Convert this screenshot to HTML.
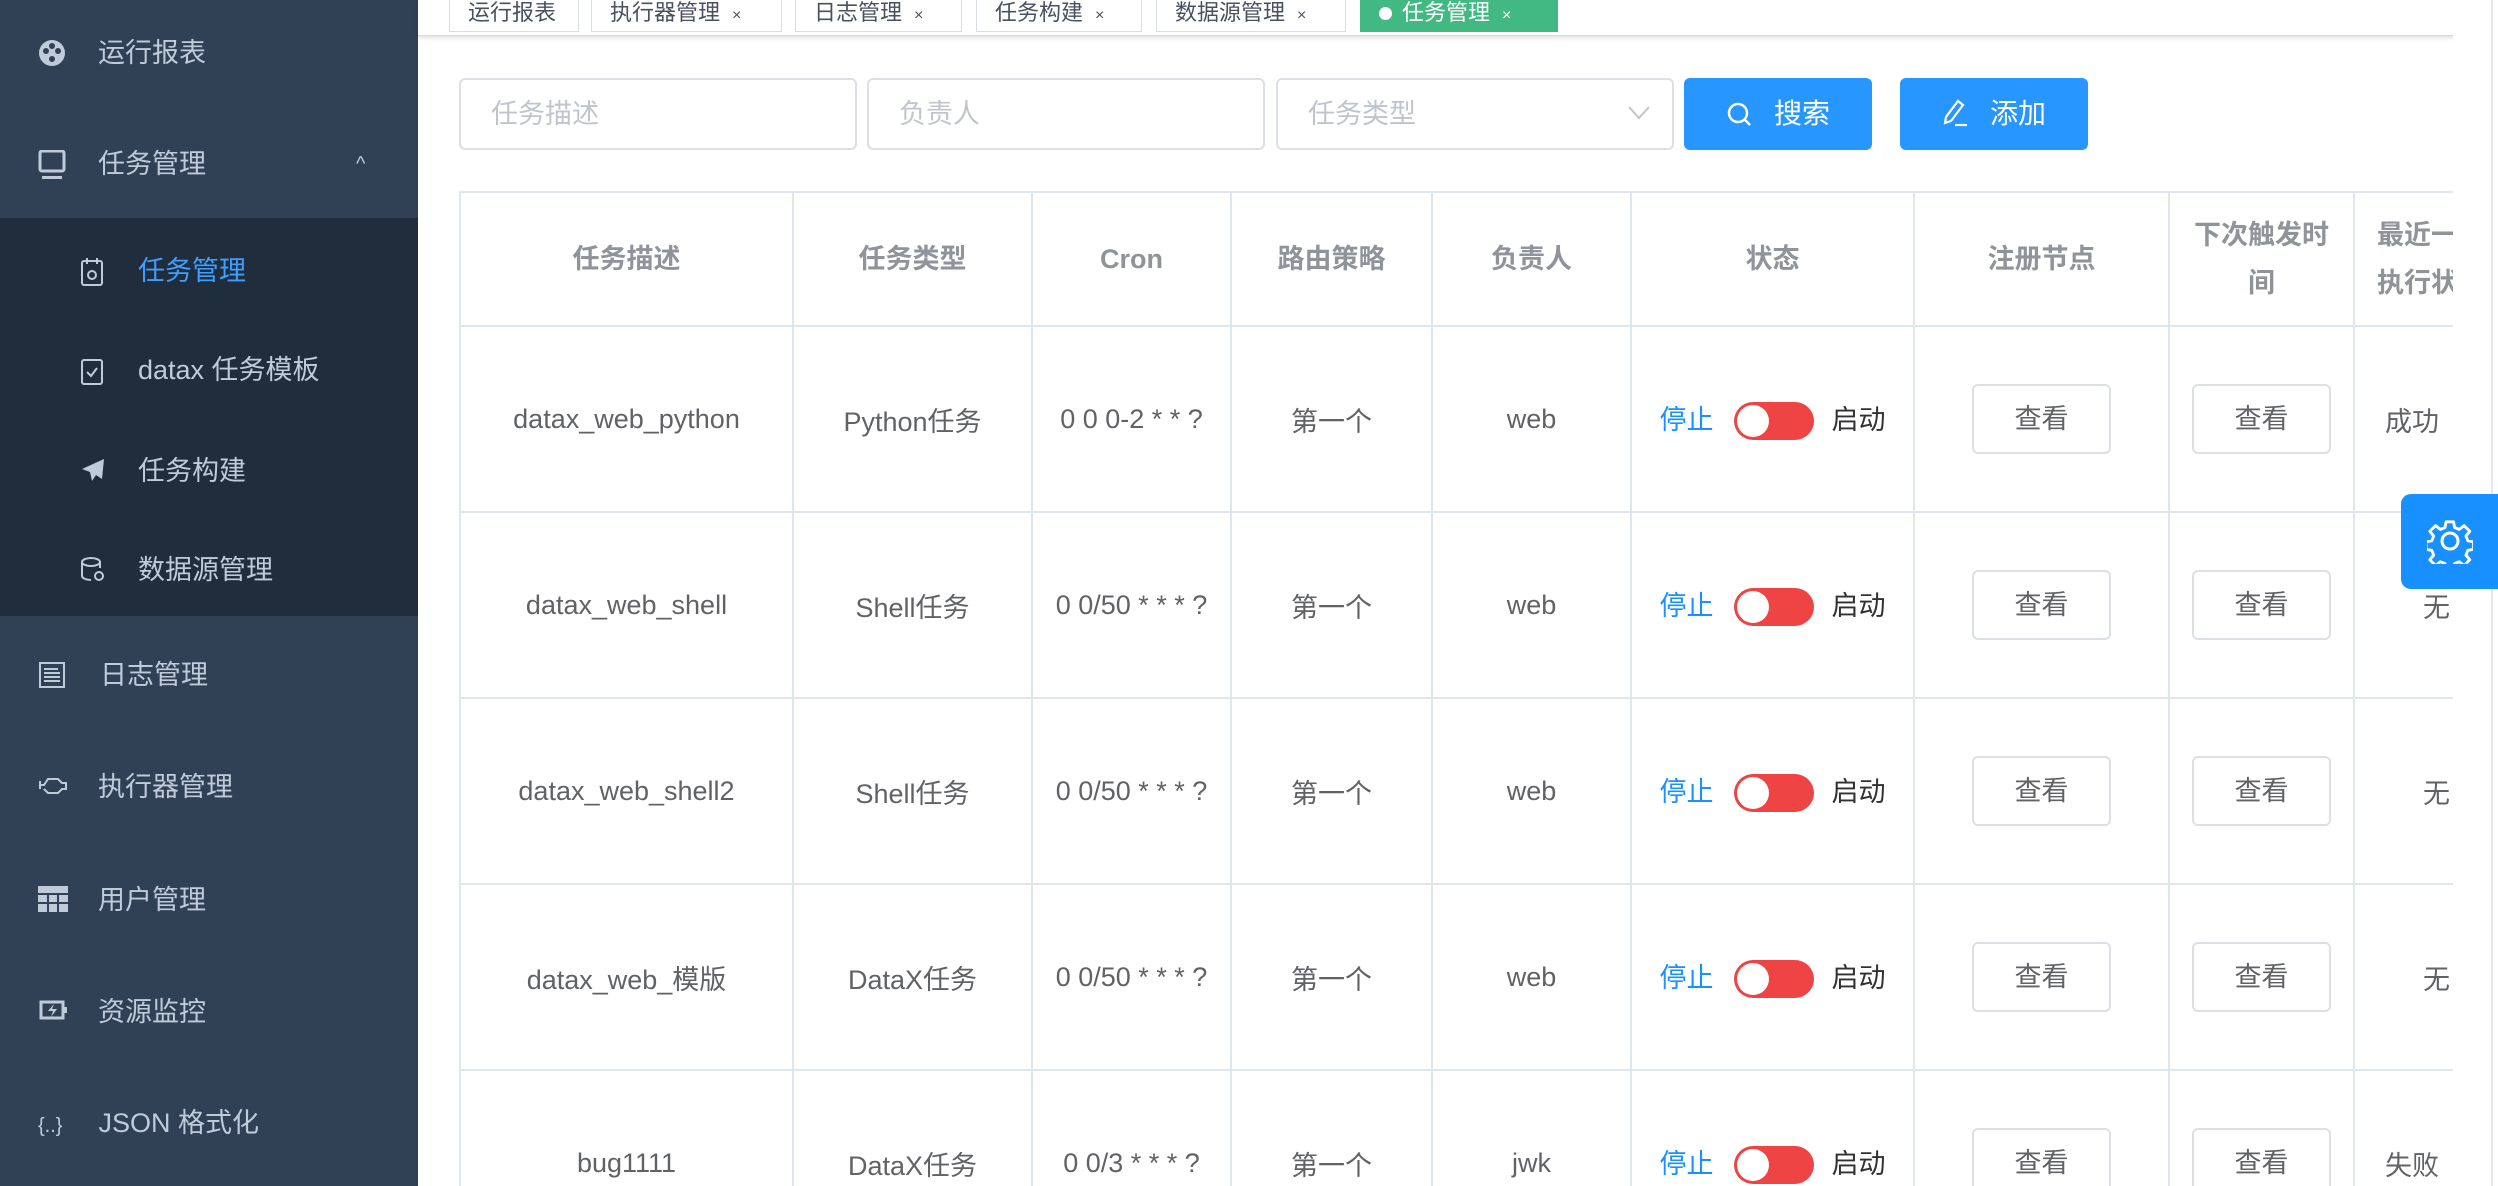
<!DOCTYPE html>
<html style="width:2498px;height:1186px;overflow:hidden"><head><meta charset="utf-8"><style>
*{box-sizing:border-box;margin:0;padding:0}
body{width:2498px;height:1186px;overflow:hidden;background:#fff;font-family:"Liberation Sans","Noto Sans CJK SC",sans-serif;position:relative}
.side{position:absolute;left:0;top:0;width:418px;height:1186px;background:#304156}
.sub{position:absolute;left:0;top:218px;width:418px;height:398px;background:#1f2d3d}
.mi{position:absolute;left:0;height:60px;line-height:60px;color:#bfcbd9;font-size:27px;white-space:nowrap}
.mi svg{position:absolute;top:16px}
.tabs{position:absolute;left:418px;top:0;right:0;height:36px;background:#fff;box-shadow:0 2px 4px rgba(0,0,0,.12);border-bottom:1px solid #d8dce5}
.tab{position:absolute;top:-6px;height:38px;border:1px solid #d8dce5;background:#fff;color:#495060;font-size:22px;line-height:36px;padding-left:18px;white-space:nowrap}
.tab.on{background:#42b983;border-color:#42b983;color:#fff}
.x{font-size:16px;margin-left:12px}
.inp{position:absolute;top:78px;height:72px;border:2px solid #dcdfe6;border-radius:6px;color:#c0c4cc;font-size:27px;line-height:68px;padding-left:30px}
.btn{position:absolute;top:78px;height:72px;width:188px;background:#2896ff;border-radius:6px;color:#fff;font-size:28px;line-height:72px;text-align:center}
.wrap{position:absolute;left:459px;top:191px;width:1994px;height:995px;overflow:hidden}
table{border-collapse:collapse;table-layout:fixed}
td,th{border:2px solid #dfe6ec;text-align:center;font-size:27px;color:#606266;font-weight:normal;overflow:hidden;white-space:nowrap;padding:0}
th{height:134px;color:#909399;font-weight:bold;line-height:48px}
td{height:186px}
.vb{display:inline-block;width:139px;height:70px;border:2px solid #dcdfe6;border-radius:6px;line-height:66px;font-size:27px;color:#606266}
.st{color:#1890ff}
.tg{display:inline-block;vertical-align:middle;width:80px;height:38px;border-radius:19px;background:#ee4444;position:relative;margin:0 18px 0 20px}
.tg:after{content:"";position:absolute;left:3px;top:3px;width:32px;height:32px;border-radius:50%;background:#fff}
.qd{color:#303133}
</style></head><body>
<div class="side">
<div class="sub"></div>
<div class="mi" style="top:23px;left:38px"><svg width="28" height="28" viewBox="0 0 28 28"><circle cx="14" cy="14" r="13" fill="#bfcbd9"/><circle cx="8" cy="12" r="3" fill="#304156"/><circle cx="14" cy="7" r="3" fill="#304156"/><circle cx="20" cy="12" r="3" fill="#304156"/><circle cx="14" cy="20" r="3" fill="#304156"/></svg><span style="margin-left:60px">运行报表</span></div>
<div class="mi" style="top:134px;left:38px"><svg width="28" height="32" viewBox="0 0 28 32"><rect x="2" y="1" width="24" height="20" rx="2" fill="none" stroke="#bfcbd9" stroke-width="3"/><rect x="4" y="26" width="20" height="3" fill="#bfcbd9"/></svg><span style="margin-left:60px">任务管理</span></div>
<div class="mi" style="top:134px;left:356px;font-size:20px">^</div>
<div class="mi" style="top:241px;left:80px;color:#409eff"><svg width="24" height="30" viewBox="0 0 24 30"><rect x="2" y="4" width="20" height="24" rx="2" fill="none" stroke="#bfcbd9" stroke-width="2"/><line x1="7" y1="1" x2="7" y2="7" stroke="#bfcbd9" stroke-width="2"/><line x1="17" y1="1" x2="17" y2="7" stroke="#bfcbd9" stroke-width="2"/><circle cx="12" cy="18" r="4" fill="none" stroke="#bfcbd9" stroke-width="2"/></svg><span style="margin-left:58px">任务管理</span></div>
<div class="mi" style="top:340px;left:80px"><svg width="24" height="30" viewBox="0 0 24 30"><rect x="2" y="4" width="20" height="24" rx="2" fill="none" stroke="#bfcbd9" stroke-width="2"/><path d="M7 16l4 4 6-8" fill="none" stroke="#bfcbd9" stroke-width="2"/></svg><span style="margin-left:58px">datax 任务模板</span></div>
<div class="mi" style="top:441px;left:80px"><svg width="26" height="26" viewBox="0 0 26 26"><path d="M24 2L2 12l8 3 2 9 4-6 6 4z" fill="#bfcbd9"/></svg><span style="margin-left:58px">任务构建</span></div>
<div class="mi" style="top:540px;left:80px"><svg width="26" height="28" viewBox="0 0 26 28"><ellipse cx="11" cy="6" rx="9" ry="4" fill="none" stroke="#bfcbd9" stroke-width="2"/><path d="M2 6v14c0 2 4 4 9 4M20 6v6" fill="none" stroke="#bfcbd9" stroke-width="2"/><circle cx="19" cy="20" r="4" fill="none" stroke="#bfcbd9" stroke-width="2"/></svg><span style="margin-left:58px">数据源管理</span></div>
<div class="mi" style="top:645px;left:38px"><svg width="28" height="28" viewBox="0 0 28 28"><rect x="2" y="2" width="24" height="24" fill="none" stroke="#bfcbd9" stroke-width="2"/><path d="M6 8h14M6 12h16M6 16h16M6 20h16" stroke="#bfcbd9" stroke-width="2"/></svg><span style="margin-left:62px">日志管理</span></div>
<div class="mi" style="top:757px;left:38px"><svg width="30" height="24" viewBox="0 0 30 24"><path d="M2 8v8M2 12h4l4-6h10l4 4h4v6h-4l-4 4H10l-4-4" fill="none" stroke="#bfcbd9" stroke-width="2"/></svg><span style="margin-left:60px">执行器管理</span></div>
<div class="mi" style="top:870px;left:38px"><svg width="30" height="26" viewBox="0 0 30 26"><rect x="0" y="0" width="30" height="26" fill="#bfcbd9"/><path d="M0 8h30M0 17h30M10 8v18M20 8v18" stroke="#304156" stroke-width="2"/></svg><span style="margin-left:60px">用户管理</span></div>
<div class="mi" style="top:982px;left:38px"><svg width="30" height="24" viewBox="0 0 30 24"><rect x="3" y="4" width="22" height="16" fill="none" stroke="#bfcbd9" stroke-width="3"/><rect x="26" y="9" width="3" height="6" fill="#bfcbd9"/><path d="M16 6l-6 7h5l-2 6 6-8h-5z" fill="#bfcbd9"/></svg><span style="margin-left:60px">资源监控</span></div>
<div class="mi" style="top:1093px;left:38px"><span style="font-size:20px">{..}</span><span style="margin-left:36px">JSON 格式化</span></div>
</div>
<div class="tabs">
<div class="tab" style="left:31px;width:130px">运行报表</div>
<div class="tab" style="left:173px;width:191px">执行器管理<span class="x">×</span></div>
<div class="tab" style="left:377px;width:167px">日志管理<span class="x">×</span></div>
<div class="tab" style="left:558px;width:166px">任务构建<span class="x">×</span></div>
<div class="tab" style="left:738px;width:190px">数据源管理<span class="x">×</span></div>
<div class="tab on" style="left:942px;width:198px"><span style="display:inline-block;width:13px;height:13px;border-radius:50%;background:#fff;margin-right:10px"></span>任务管理<span class="x">×</span></div>
</div>
<div class="inp" style="left:459px;width:398px">任务描述</div>
<div class="inp" style="left:867px;width:398px">负责人</div>
<div class="inp" style="left:1276px;width:398px">任务类型<svg style="position:absolute;right:22px;top:26px" width="22" height="14" viewBox="0 0 22 14"><path d="M1 1l10 11 10-11" fill="none" stroke="#c0c4cc" stroke-width="2"/></svg></div>
<div class="btn" style="left:1684px"><svg width="26" height="26" viewBox="0 0 26 26" style="vertical-align:-4px;margin-right:22px"><circle cx="12" cy="12" r="9" fill="none" stroke="#fff" stroke-width="2.5"/><path d="M19 19l5 5" stroke="#fff" stroke-width="2.5"/></svg>搜索</div>
<div class="btn" style="left:1900px"><svg width="26" height="28" viewBox="0 0 26 28" style="vertical-align:-4px;margin-right:22px"><path d="M16 2l5 4-12 16-6 2 1-6z" fill="none" stroke="#fff" stroke-width="2.2"/><path d="M13 26h12" stroke="#fff" stroke-width="2.2"/></svg>添加</div>
<div class="wrap">
<table style="width:2000px">
<colgroup><col style="width:333px"><col style="width:239px"><col style="width:199px"><col style="width:201px"><col style="width:199px"><col style="width:283px"><col style="width:255px"><col style="width:185px"><col style="width:106px"></colgroup>
<tr><th>任务描述</th><th>任务类型</th><th>Cron</th><th>路由策略</th><th>负责人</th><th>状态</th><th>注册节点</th><th>下次触发时<br>间</th><th style="text-align:left;padding-left:22px">最近一次<br>执行状态</th></tr>
<tr><td>datax_web_python</td><td>Python任务</td><td>0 0 0-2 * * ?</td><td>第一个</td><td>web</td><td><span class="st">停止</span><span class="tg"></span><span class="qd">启动</span></td><td><span class="vb">查看</span></td><td><span class="vb">查看</span></td><td style="text-align:left;padding-left:30px">成功</td></tr>
<tr><td>datax_web_shell</td><td>Shell任务</td><td>0 0/50 * * * ?</td><td>第一个</td><td>web</td><td><span class="st">停止</span><span class="tg"></span><span class="qd">启动</span></td><td><span class="vb">查看</span></td><td><span class="vb">查看</span></td><td style="text-align:left;padding-left:68px">无</td></tr>
<tr><td>datax_web_shell2</td><td>Shell任务</td><td>0 0/50 * * * ?</td><td>第一个</td><td>web</td><td><span class="st">停止</span><span class="tg"></span><span class="qd">启动</span></td><td><span class="vb">查看</span></td><td><span class="vb">查看</span></td><td style="text-align:left;padding-left:68px">无</td></tr>
<tr><td>datax_web_模版</td><td>DataX任务</td><td>0 0/50 * * * ?</td><td>第一个</td><td>web</td><td><span class="st">停止</span><span class="tg"></span><span class="qd">启动</span></td><td><span class="vb">查看</span></td><td><span class="vb">查看</span></td><td style="text-align:left;padding-left:68px">无</td></tr>
<tr><td>bug1111</td><td>DataX任务</td><td>0 0/3 * * * ?</td><td>第一个</td><td>jwk</td><td><span class="st">停止</span><span class="tg"></span><span class="qd">启动</span></td><td><span class="vb">查看</span></td><td><span class="vb">查看</span></td><td style="text-align:left;padding-left:30px">失败</td></tr>
</table>
</div>
<div style="position:absolute;left:2453px;top:0;width:45px;height:1186px;background:#fff"></div>
<div style="position:absolute;left:2491px;top:0;width:2px;height:1186px;background:#e4e7ed"></div>
<div style="position:absolute;left:2401px;top:494px;width:97px;height:95px;background:#1890ff;border-radius:10px 0 0 10px"><svg width="46" height="46" viewBox="0 0 46 46" style="position:absolute;left:26px;top:24px"><path d="M19 3h8l1 6 5 2 5-4 6 6-4 5 2 5 6 1v8l-6 1-2 5 4 5-6 6-5-4-5 2-1 6h-8l-1-6-5-2-5 4-6-6 4-5-2-5-6-1v-8l6-1 2-5-4-5 6-6 5 4 5-2z" transform="scale(0.95) translate(1 1)" fill="none" stroke="#fff" stroke-width="3" stroke-linejoin="round"/><circle cx="23" cy="23" r="8" fill="none" stroke="#fff" stroke-width="3"/></svg></div>
</body></html>
